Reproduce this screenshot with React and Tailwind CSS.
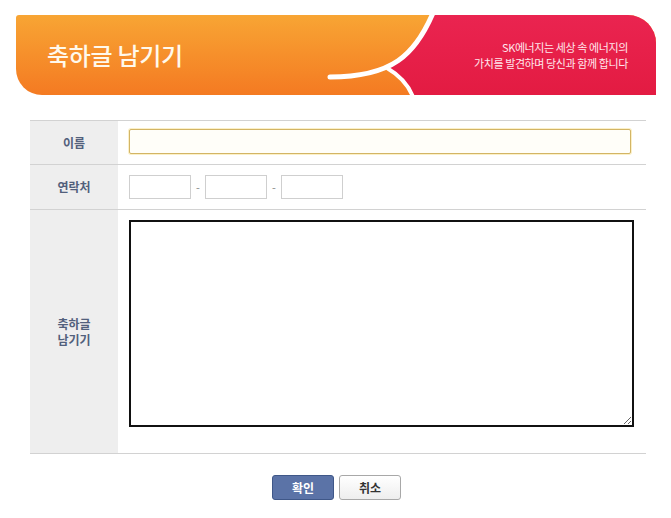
import React from 'react';

const font = { fontFamily: '"Noto Sans CJK KR", "Noto Sans", sans-serif' };

const Banner = () => (
    // orange / red header with the white wing curves
    <div className="relative ml-[16px] w-[640px] h-[80px] overflow-hidden rounded-tl-[3px] rounded-bl-[26px] rounded-tr-[28px]">
        <svg className="absolute inset-0" width="640" height="80" viewBox="0 0 640 80">
            <defs>
                <linearGradient id="org" x1="0" y1="0" x2="0" y2="1">
                    <stop offset="0" stopColor="#f8a534" />
                    <stop offset="1" stopColor="#f47a22" />
                </linearGradient>
                <linearGradient id="red" x1="0" y1="0" x2="0" y2="1">
                    <stop offset="0" stopColor="#ea2450" />
                    <stop offset="1" stopColor="#e31b42" />
                </linearGradient>
            </defs>
            <rect width="640" height="80" fill="url(#org)" />
            <path d="M416 0 L640 0 L640 80 L397 80 C392 69 383 60 371 53 C390 42 405 22 416 0 Z" fill="url(#red)" />
            <path d="M417 -2 C399 40 376 62 314 62" stroke="#fff" strokeWidth="5" fill="none" strokeLinecap="round" />
            <path d="M371 53 C383 60 392 69 397 82" stroke="#fff" strokeWidth="4" fill="none" />
        </svg>
        <div className="relative flex items-center justify-between h-full pl-[31px] pr-[28px]">
            <h1 className="text-[24px] font-medium text-[#fff9ec] tracking-[-0.3px]">축하글 남기기</h1>
            <p className="text-[11px] leading-[16px] text-right text-[#ffe6ec] tracking-[-0.4px]">
                SK에너지는 세상 속 에너지의<br />
                가치를 발견하며 당신과 함께 합니다
            </p>
        </div>
    </div>
);

const Label = ({ children }) => (
    <div className="w-[88px] shrink-0 bg-[#eeeeee] flex items-center justify-center text-center text-[12px] leading-[16px] font-bold text-[#52607c]">
        {children}
    </div>
);

const PhoneBox = () => <input className="w-[62px] h-[24px] border border-[#cfcfcf] bg-white" />;

const Dash = () => <span className="w-[14px] text-center">-</span>;

export default function App() {
    return (
        <div className="w-[671px] h-[518px] bg-white pt-[15px]" style={font}>
            <Banner />

            {/* FORM TABLE */}
            <div className="ml-[30px] mt-[25px] w-[616px] border-t border-[#d2d2d2]">
                <div className="flex h-[44px] border-b border-[#d2d2d2]">
                    <Label>이름</Label>
                    <div className="flex-1 pl-[11px] pt-[8px]">
                        <input className="w-[502px] h-[25px] border border-[#d3b565] rounded-[2px] bg-[#fffef9] shadow-[0_0_0_1px_#fbf0c8]" />
                    </div>
                </div>
                <div className="flex h-[45px] border-b border-[#d2d2d2]">
                    <Label>연락처</Label>
                    <div className="flex-1 pl-[11px] flex items-center text-[11px] text-[#888]">
                        <PhoneBox />
                        <Dash />
                        <PhoneBox />
                        <Dash />
                        <PhoneBox />
                    </div>
                </div>
                <div className="flex h-[244px] border-b border-[#d2d2d2]">
                    <Label>축하글<br />남기기</Label>
                    <div className="flex-1 pl-[11px] pt-[10px]">
                        <textarea className="block w-[505px] h-[207px] border-2 border-[#111] bg-white resize" />
                    </div>
                </div>
            </div>

            {/* BUTTONS */}
            <div className="flex justify-center gap-[5px] mt-[21px] pl-[2px]">
                <button className="w-[62px] h-[25px] rounded-[3px] border border-[#3f5788] bg-[#5b73a7] text-white text-[12px] font-bold">확인</button>
                <button className="w-[62px] h-[25px] rounded-[3px] border border-[#a8a8a8] bg-gradient-to-b from-white to-[#eeeeee] text-[#333] text-[12px] font-bold">취소</button>
            </div>
        </div>
    );
}
